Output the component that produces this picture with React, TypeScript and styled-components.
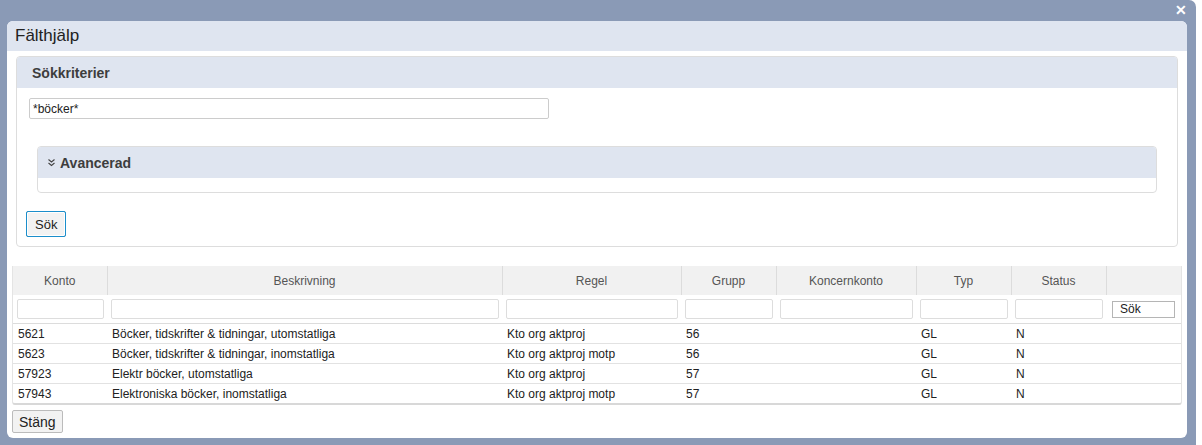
import styled, { createGlobalStyle } from "styled-components";

const GlobalStyle = createGlobalStyle`
  html, body {
    margin: 0;
    padding: 0;
    background: #ffffff;
    font-family: "Liberation Sans", Arial, sans-serif;
  }
`;

const Frame = styled.div`
  width: 1196px;
  height: 445px;
  box-sizing: border-box;
  background: #8a9ab6;
  border-top-right-radius: 7px;
  padding: 0 9px 7px 7px;
  display: flex;
  flex-direction: column;
`;

const TopStrip = styled.div`
  height: 21px;
  display: flex;
  justify-content: flex-end;
  align-items: flex-start;
`;

const Close = styled.span`
  color: #ffffff;
  font-size: 14px;
  font-weight: bold;
  line-height: 14px;
  margin-top: 3px;
  cursor: pointer;
`;

const Dialog = styled.div`
  flex: 1;
  background: #ffffff;
  border-radius: 6px;
  display: flex;
  flex-direction: column;
  overflow: hidden;
`;

const TitleBar = styled.div`
  height: 30px;
  background: #dfe5f0;
  display: flex;
  align-items: center;
  padding-left: 8px;
  font-size: 17px;
  color: #222;
`;

const Panel = styled.div<{ $inset?: boolean }>`
  border: 1px solid #dddddd;
  border-radius: 4px;
  overflow: hidden;
  margin: ${(p) => (p.$inset ? "27px 11px 18px 11px" : "5px 9px 0 9px")};
`;

const PanelHeader = styled.div<{ $pad: number }>`
  height: 31px;
  background: #dfe5f0;
  display: flex;
  align-items: center;
  padding-left: ${(p) => p.$pad}px;
  font-size: 14px;
  font-weight: bold;
  color: #3d3d3d;
  gap: 4px;
`;

const PanelBody = styled.div`
  padding: 10px 9px 9px 9px;
`;

const SearchInput = styled.input`
  display: block;
  margin-left: 3px;
  width: 520px;
  height: 21px;
  box-sizing: border-box;
  border: 1px solid #cccccc;
  border-radius: 2px;
  padding: 0 3px;
  font-family: "Liberation Sans", Arial, sans-serif;
  font-size: 12px;
  color: #222;
  outline: none;
`;

const EmptyBody = styled.div`
  height: 14px;
`;

const Button = styled.button<{ $focus?: boolean; $size: number }>`
  font-family: "Liberation Sans", Arial, sans-serif;
  font-size: ${(p) => p.$size}px;
  color: #222;
  background: #f2f2f2;
  border: 1px solid #bbbbbb;
  border-radius: 2px;
  padding: 0 ${(p) => (p.$focus ? 8 : 6)}px;
  height: ${(p) => (p.$focus ? 26 : 23)}px;
  box-sizing: border-box;
  outline: ${(p) => (p.$focus ? "1px solid #1b8ecb" : "none")};
  outline-offset: -1px;
  box-shadow: ${(p) => (p.$focus ? "inset 0 0 0 1px #ffffff" : "none")};
  display: block;
`;

const TableWrap = styled.div`
  margin: 19px 5px 0 5px;
  border: 1px solid #e4e4e4;
  border-top: none;
  border-bottom: 2px solid #d8d8d8;
  border-radius: 0 0 3px 3px;
`;

const Table = styled.table`
  width: 100%;
  border-collapse: collapse;
  table-layout: fixed;
  font-size: 12px;
  color: #222;
`;

const Th = styled.th`
  height: 29px;
  background: #f1f1f1;
  color: #555;
  font-weight: normal;
  text-align: center;
  border-left: 1px solid #dcdcdc;
  padding: 0;
  &:first-child {
    border-left: none;
  }
`;

const FilterCell = styled.td`
  height: 28px;
  padding: 0 3px 0 4px;
  border-bottom: 1px solid #dcdcdc;
`;

const FilterInput = styled.input`
  display: block;
  width: 100%;
  height: 20px;
  box-sizing: border-box;
  border: 1px solid #dddddd;
  border-radius: 2px;
  outline: none;
`;

const SmallButton = styled.button`
  display: block;
  width: 63px;
  height: 17px;
  box-sizing: border-box;
  border: 1px solid #b5b5b5;
  background: #ffffff;
  text-align: left;
  padding: 0 0 0 7px;
  font-family: "Liberation Sans", Arial, sans-serif;
  font-size: 12px;
  color: #222;
  margin-left: 2px;
`;

const Td = styled.td`
  height: 19px;
  padding: 0 0 0 5px;
  border-bottom: 1px solid #e2e2e2;
  white-space: nowrap;
  overflow: hidden;
  tr:last-child > & {
    border-bottom: none;
  }
`;

const Footer = styled.div`
  padding: 5px 5px 0 5px;
`;

const columns = [
  { name: "Konto", width: 94 },
  { name: "Beskrivning", width: 395 },
  { name: "Regel", width: 179 },
  { name: "Grupp", width: 95 },
  { name: "Koncernkonto", width: 140 },
  { name: "Typ", width: 95 },
  { name: "Status", width: 95 },
  { name: "", width: 75 },
];

const rows = [
  ["5621", "Böcker, tidskrifter & tidningar, utomstatliga", "Kto org aktproj", "56", "", "GL", "N"],
  ["5623", "Böcker, tidskrifter & tidningar, inomstatliga", "Kto org aktproj motp", "56", "", "GL", "N"],
  ["57923", "Elektr böcker, utomstatliga", "Kto org aktproj", "57", "", "GL", "N"],
  ["57943", "Elektroniska böcker, inomstatliga", "Kto org aktproj motp", "57", "", "GL", "N"],
];

const Chevrons = () => (
  <svg width="9" height="9" viewBox="0 0 9 9" fill="none" stroke="#444" strokeWidth="1.1">
    <path d="M1.5 1.5 L4.5 4 L7.5 1.5" />
    <path d="M1.5 5 L4.5 7.5 L7.5 5" />
  </svg>
);

export default function App() {
  return (
    <>
      <GlobalStyle />
      <Frame>
        <TopStrip>
          <Close>✕</Close>
        </TopStrip>
        <Dialog>
          <TitleBar>Fälthjälp</TitleBar>
          <Panel>
            <PanelHeader $pad={15}>Sökkriterier</PanelHeader>
            <PanelBody>
              <SearchInput defaultValue="*böcker*" />
              <Panel $inset>
                <PanelHeader $pad={9}>
                  <Chevrons />
                  Avancerad
                </PanelHeader>
                <EmptyBody />
              </Panel>
              <Button $focus $size={13}>Sök</Button>
            </PanelBody>
          </Panel>
          <TableWrap>
            <Table>
              <colgroup>
                {columns.map((c, i) => (
                  <col key={i} style={{ width: c.width }} />
                ))}
              </colgroup>
              <thead>
                <tr>
                  {columns.map((c, i) => (
                    <Th key={i}>{c.name}</Th>
                  ))}
                </tr>
              </thead>
              <tbody>
                <tr>
                  {columns.slice(0, 7).map((c, i) => (
                    <FilterCell key={i}>
                      <FilterInput />
                    </FilterCell>
                  ))}
                  <FilterCell>
                    <SmallButton>Sök</SmallButton>
                  </FilterCell>
                </tr>
                {rows.map((r, i) => (
                  <tr key={i}>
                    {r.map((v, j) => (
                      <Td key={j}>{v}</Td>
                    ))}
                    <Td />
                  </tr>
                ))}
              </tbody>
            </Table>
          </TableWrap>
          <Footer>
            <Button $size={14}>Stäng</Button>
          </Footer>
        </Dialog>
      </Frame>
    </>
  );
}
